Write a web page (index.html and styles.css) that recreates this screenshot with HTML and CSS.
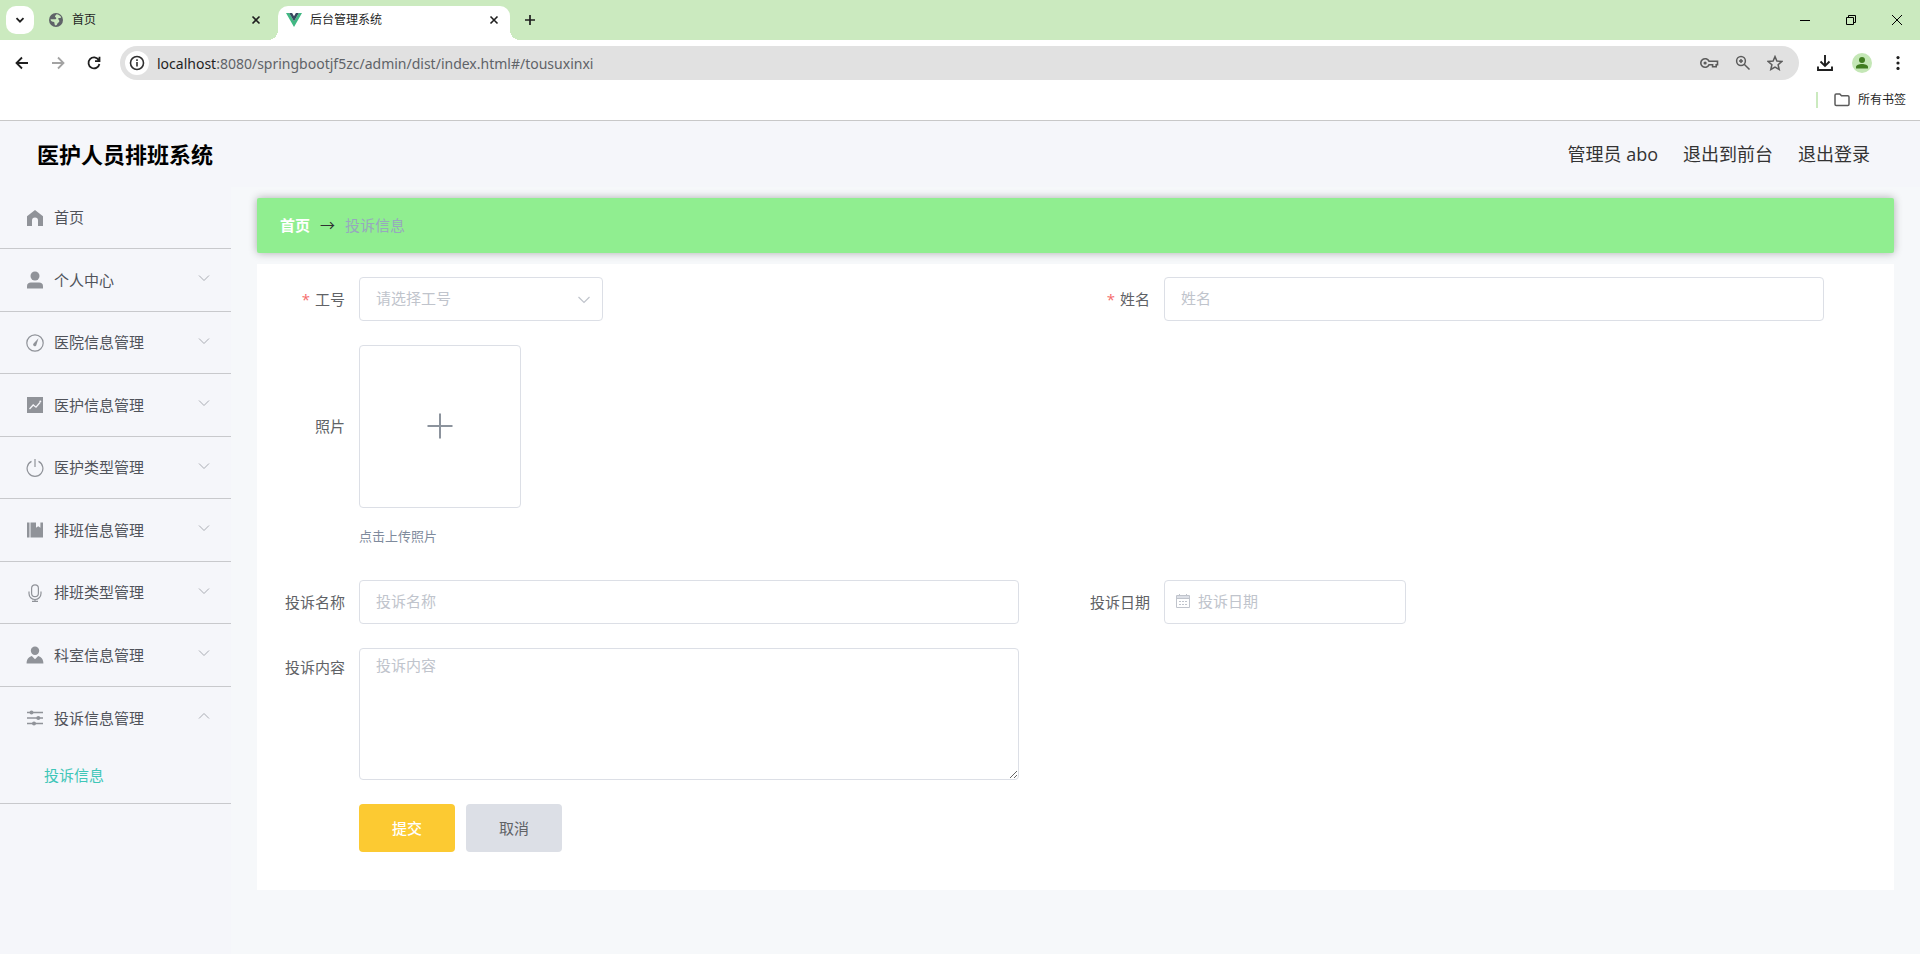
FILE: index.html
```html
<!DOCTYPE html>
<html lang="zh-CN">
<head>
<meta charset="utf-8">
<title>后台管理系统</title>
<link rel="stylesheet" href="styles.css">
</head>
<body>
<div class="browser">
  <div class="tabstrip">
    <button class="tab-search" aria-label="搜索标签页"><svg width="10" height="10" viewBox="0 0 10 10"><path d="M1.500 3.200L5 6.700l3.500-3.500" fill="none" stroke="#1f1f1f" stroke-width="1.800"/></svg></button>
    <div class="tab">
      <svg width="16" height="16" viewBox="0 0 16 16"><circle cx="8" cy="8" r="7" fill="#5f6368"/><path d="M8.600 2.200c-1 1-1.600 1.300-1.600 2.400 0 .9 1.300.7 1.300 1.700s-1.300 1-2.500 1H2.600c0 1.800 1 2.300 2.400 2.400 1.700.1 1.500 1.200 1.500 2.100 0 .8.500 1.600 1.300 1.700 1.600-.3 1-1.700 2-2.500.8-.6 1.500-.8 1.500-1.900 0-1.300-1.100-1.300-1.100-2.300 0-.8 1-.8 2.100-.8.600-.1.900-.4.800-.9-1-1.700-2.500-2.700-4.500-2.900z" fill="#cbeabf"/></svg>
      <span class="tab-title">首页</span>
      <button class="tab-close" aria-label="关闭"><svg width="10" height="10" viewBox="0 0 10 10"><path d="M1.500 1.500l7 7m0-7l-7 7" stroke="#1f1f1f" stroke-width="1.600"/></svg></button>
    </div>
    <div class="tab tab-active">
      <svg width="16" height="16" viewBox="0 0 16 16"><path d="M0 1h3.200L8 9.300 12.800 1H16L8 15z" fill="#41b883"/><path d="M3.200 1h2.900L8 4.300 9.900 1h2.900L8 9.300z" fill="#35495e"/></svg>
      <span class="tab-title">后台管理系统</span>
      <button class="tab-close" aria-label="关闭"><svg width="10" height="10" viewBox="0 0 10 10"><path d="M1.500 1.500l7 7m0-7l-7 7" stroke="#1f1f1f" stroke-width="1.600"/></svg></button>
    </div>
    <button class="tab-new" aria-label="新标签页"><svg width="12" height="12" viewBox="0 0 12 12"><path d="M6 1v10M1 6h10" stroke="#1f1f1f" stroke-width="1.700"/></svg></button>
    <div class="window-controls">
      <button aria-label="最小化"><svg width="12" height="12" viewBox="0 0 12 12"><path d="M1 6.500h10" stroke="#000"/></svg></button>
      <button aria-label="还原"><svg width="12" height="12" viewBox="0 0 12 12"><path d="M1.500 3.500h7v7h-7zM3.500 3.500v-2h7v7h-2" fill="none" stroke="#000"/></svg></button>
      <button aria-label="关闭窗口"><svg width="12" height="12" viewBox="0 0 12 12"><path d="M1 1l10 10M11 1L1 11" stroke="#000"/></svg></button>
    </div>
  </div>
  <div class="toolbar">
    <div class="toolbar-nav">
      <button aria-label="后退"><svg width="16" height="16" viewBox="0 0 16 16"><path d="M14 8H3M8 2.500L2.500 8 8 13.500" fill="none" stroke="#1f1f1f" stroke-width="1.800"/></svg></button>
      <button aria-label="前进"><svg width="16" height="16" viewBox="0 0 16 16"><path d="M2 8h11M8 2.500L13.500 8 8 13.500" fill="none" stroke="#a3a3a3" stroke-width="1.800"/></svg></button>
      <button aria-label="刷新"><svg width="16" height="16" viewBox="0 0 16 16"><path d="M12.700 5A5.500 5.500 0 1 0 13.400 9M13.500 1.800v4.400H9" fill="none" stroke="#1f1f1f" stroke-width="1.800"/></svg></button>
    </div>
    <div class="omnibox">
      <button class="site-info" aria-label="网站信息"><svg width="16" height="16" viewBox="0 0 16 16"><circle cx="8" cy="8" r="6.500" fill="none" stroke="#303030" stroke-width="1.600"/><path d="M8 7v4.500M8 4.300v1.600" stroke="#303030" stroke-width="1.600"/></svg></button>
      <div class="url" role="textbox" contenteditable="true" spellcheck="false" aria-label="地址栏"><span class="url-host">localhost</span>:8080/springbootjf5zc/admin/dist/index.html#/tousuxinxi</div>
      <button aria-label="密码"><svg width="20" height="16" viewBox="0 0 20 16"><path d="M10 6.200h8.500v3.600h-1.300v2h-3.600v-2H10A4.300 4.300 0 1 1 10 6.200z" fill="none" stroke="#5b5b5b" stroke-width="1.600"/><circle cx="6.100" cy="8" r="1.600" fill="#5b5b5b"/></svg></button>
      <button aria-label="缩放"><svg width="16" height="16" viewBox="0 0 16 16"><circle cx="6" cy="6" r="4.400" fill="none" stroke="#5b5b5b" stroke-width="1.500"/><path d="M9.200 9.200l5.300 5.300M6 4v4M4 6h4" stroke="#5b5b5b" stroke-width="1.500"/></svg></button>
      <button aria-label="收藏"><svg width="16" height="16" viewBox="0 0 16 16"><path d="M8 1.600l1.900 4.500 4.900.4-3.700 3.200 1.100 4.800L8 12l-4.200 2.500 1.100-4.800L1.200 6.500l4.900-.4z" fill="none" stroke="#5b5b5b" stroke-width="1.500"/></svg></button>
    </div>
    <div class="toolbar-actions">
      <button aria-label="下载"><svg width="18" height="18" viewBox="0 0 18 18"><path d="M9 1v10.500M4.500 7.500L9 12l4.500-4.500M2 12.500V16h14v-3.500" fill="none" stroke="#1f1f1f" stroke-width="1.900"/></svg></button>
      <button aria-label="用户"><svg width="20" height="20" viewBox="0 0 20 20"><circle cx="10" cy="10" r="10" fill="#c4e7b6"/><circle cx="10" cy="7" r="3" fill="#3f7d20"/><path d="M4 15.500v-1.500c0-2 3-3 6-3s6 1 6 3v1.500z" fill="#3f7d20"/></svg></button>
      <button aria-label="菜单"><svg width="16" height="16" viewBox="0 0 16 16"><g fill="#1f1f1f"><circle cx="8" cy="2.600" r="1.600"/><circle cx="8" cy="8" r="1.600"/><circle cx="8" cy="13.400" r="1.600"/></g></svg></button>
    </div>
  </div>
  <div class="bookmarks">
    <span class="bookmarks-divider"></span>
    <button class="bookmarks-all"><svg width="16" height="14" viewBox="0 0 16 14"><path d="M1 2.200C1 1.500 1.500 1 2.200 1h3.600l1.700 1.800h6.300c.7 0 1.200.5 1.200 1.200v7.300c0 .7-.5 1.200-1.200 1.200H2.200c-.7 0-1.200-.5-1.200-1.200z" fill="none" stroke="#5b5b5b" stroke-width="1.500"/></svg>所有书签</button>
  </div>
</div>

<div class="app">
  <header class="app-header">
    <h1 class="app-title">医护人员排班系统</h1>
    <nav class="app-links">
      <span>管理员 abo</span>
      <a href="#/front">退出到前台</a>
      <a href="#/login">退出登录</a>
    </nav>
  </header>
  <div class="app-body">
    <aside class="sidebar">
      <ul class="menu">
        <li class="menu-item"><a class="menu-row" href="#/">
          <svg class="menu-icon" viewBox="0 0 18 18"><path d="M9 1l8 6.300V17h-5v-5.500a3 3 0 0 0-6 0V17H1V7.300z" fill="#909399"/></svg><span>首页</span></a></li>
        <li class="menu-item"><a class="menu-row" href="#/center">
          <svg class="menu-icon" viewBox="0 0 18 18"><circle cx="9" cy="5" r="4.500" fill="#909399"/><path d="M1 17.500v-2.300C1 12.800 2.500 11.500 5 11.500h8c2.500 0 4 1.300 4 3.700v2.300z" fill="#909399"/></svg><span>个人中心</span>
          <svg class="menu-arrow" viewBox="0 0 12 12"><path d="M1 3.500l5 5 5-5"/></svg></a></li>
        <li class="menu-item"><a class="menu-row" href="#/hospital">
          <svg class="menu-icon" viewBox="0 0 18 18"><circle cx="9" cy="9" r="8.200" fill="none" stroke="#909399" stroke-width="1.200"/><path d="M12.500 4.200l-2 6.300a1.700 1.700 0 1 1-2.700-1.300z" fill="#909399"/></svg><span>医院信息管理</span>
          <svg class="menu-arrow" viewBox="0 0 12 12"><path d="M1 3.500l5 5 5-5"/></svg></a></li>
        <li class="menu-item"><a class="menu-row" href="#/staff">
          <svg class="menu-icon" viewBox="0 0 18 18"><path d="M1 1h16v16H1z" fill="#909399"/><path d="M3.500 13l3.700-4 2.800 2.200 4-4.700" fill="none" stroke="#f5f6fa" stroke-width="1.300"/><circle cx="14.300" cy="5.500" r="1" fill="#f5f6fa"/></svg><span>医护信息管理</span>
          <svg class="menu-arrow" viewBox="0 0 12 12"><path d="M1 3.500l5 5 5-5"/></svg></a></li>
        <li class="menu-item"><a class="menu-row" href="#/staff-type">
          <svg class="menu-icon" viewBox="0 0 18 18"><path d="M9 0v8M5.500 2.400a7.900 7.900 0 1 0 7 0" fill="none" stroke="#909399" stroke-width="1.200"/></svg><span>医护类型管理</span>
          <svg class="menu-arrow" viewBox="0 0 12 12"><path d="M1 3.500l5 5 5-5"/></svg></a></li>
        <li class="menu-item"><a class="menu-row" href="#/shift">
          <svg class="menu-icon" viewBox="0 0 18 18"><path d="M1 1.500h2.500v15H1zM4.500 1.500H10v5.200l2.200-1.500 2.200 1.500V1.500H17v15H4.500z" fill="#909399"/></svg><span>排班信息管理</span>
          <svg class="menu-arrow" viewBox="0 0 12 12"><path d="M1 3.500l5 5 5-5"/></svg></a></li>
        <li class="menu-item"><a class="menu-row" href="#/shift-type">
          <svg class="menu-icon" viewBox="0 0 18 18"><g fill="none" stroke="#909399" stroke-width="1.200"><rect x="5.600" y=".8" width="6.800" height="11.800" rx="3.400"/><path d="M3 7.500v2a6 6 0 0 0 12 0v-2M9 15.500v2M6 17.400h6"/></g></svg><span>排班类型管理</span>
          <svg class="menu-arrow" viewBox="0 0 12 12"><path d="M1 3.500l5 5 5-5"/></svg></a></li>
        <li class="menu-item"><a class="menu-row" href="#/dept">
          <svg class="menu-icon" viewBox="0 0 18 18"><circle cx="9" cy="4.700" r="4.200" fill="#909399"/><path d="M.6 17.500c0-4 2-6.700 5.200-7.500L9 13.300l3.200-3.300c3.200.8 5.200 3.500 5.200 7.500z" fill="#909399"/></svg><span>科室信息管理</span>
          <svg class="menu-arrow" viewBox="0 0 12 12"><path d="M1 3.500l5 5 5-5"/></svg></a></li>
        <li class="menu-item"><a class="menu-row" href="#/complaint">
          <svg class="menu-icon" viewBox="0 0 18 18"><path d="M1 3.500h16M1 9h16M1 14.500h16" stroke="#909399" stroke-width="1.300"/><g fill="#909399"><circle cx="5.500" cy="3.500" r="2"/><circle cx="12.300" cy="9" r="2"/><circle cx="8" cy="14.500" r="2"/></g></svg><span>投诉信息管理</span>
          <svg class="menu-arrow" viewBox="0 0 12 12"><path d="M1 8.500l5-5 5 5"/></svg></a>
          <a class="submenu-row" href="#/tousuxinxi">投诉信息</a></li>
      </ul>
    </aside>
    <main class="content">
      <nav class="breadcrumb">
        <a href="#/">首页</a><span class="breadcrumb-arrow">→</span><span class="breadcrumb-current">投诉信息</span>
      </nav>
      <form class="panel">
        <div class="field field-required">
          <label class="field-label" for="job">工号</label>
          <div class="control control-select">
            <select id="job" class="input" required><option value="">请选择工号</option></select>
            <svg class="select-arrow" width="12" height="12" viewBox="0 0 12 12"><path d="M.5 3l5.500 5.500L11.500 3" fill="none" stroke="#c0c4cc" stroke-width="1.200"/></svg>
          </div>
        </div>
        <div class="field field-required">
          <label class="field-label" for="name">姓名</label>
          <div class="control"><input id="name" class="input" type="text" placeholder="姓名"></div>
        </div>
        <div class="field field-wide">
          <label class="field-label field-label-photo" for="photo">照片</label>
          <div class="control">
            <button id="photo" class="upload" type="button" aria-label="上传照片"><svg width="26" height="26" viewBox="0 0 26 26"><path d="M13 .5v25M.5 13h25" stroke="#8c939d" stroke-width="2"/></svg></button>
            <p class="upload-tip">点击上传照片</p>
          </div>
        </div>
        <div class="field">
          <label class="field-label" for="title">投诉名称</label>
          <div class="control"><input id="title" class="input" type="text" placeholder="投诉名称"></div>
        </div>
        <div class="field">
          <label class="field-label" for="date">投诉日期</label>
          <div class="control control-date">
            <input id="date" class="input" type="text" placeholder="投诉日期">
            <svg class="date-icon" width="14" height="14" viewBox="0 0 14 14"><path d="M.5 1.500h13v12H.5zM.5 4.500h13M3.500 0v3M10.500 0v3" fill="none" stroke="#c0c4cc"/><path d="M1 3h12" stroke="#dcdfe6" stroke-width="2"/><path d="M3 7.500h2m1 0h2m1 0h2M3 10.500h2m1 0h2m1 0h2" stroke="#c0c4cc"/></svg>
          </div>
        </div>
        <div class="field field-wide">
          <label class="field-label field-label-area" for="body">投诉内容</label>
          <div class="control control-half"><textarea id="body" class="input textarea" placeholder="投诉内容"></textarea></div>
        </div>
        <div class="actions">
          <button class="btn btn-primary" type="button">提交</button>
          <button class="btn btn-default" type="button">取消</button>
        </div>
      </form>
    </main>
  </div>
</div>
</body>
</html>
```

FILE: styles.css
```css
* {
  box-sizing: border-box;
}

body {
  margin: 0;
  min-height: 100vh;
  display: flex;
  flex-direction: column;
  background: #f5f6fa;
  color: #606266;
  font: 15px/1.5 "Open Sans", "Noto Sans CJK SC", sans-serif;
}

a {
  color: inherit;
  text-decoration: none;
}

svg {
  display: block;
  flex: none;
}

button {
  display: flex;
  align-items: center;
  justify-content: center;
  padding: 0;
  border: 0;
  background: none;
  font: inherit;
  color: inherit;
}

/* Browser frame */
.browser {
  background: #fff;
  border-bottom: 1px solid #c8c8c8;
  color: #1f1f1f;
  font-size: 12px;
}

.tabstrip {
  display: flex;
  align-items: flex-end;
  height: 40px;
  padding-left: 6px;
  background: #cbeabf;
}

.tab-search {
  width: 28px;
  height: 28px;
  margin: 0 6px 6px 0;
  border-radius: 10px;
  background: #fff;
}

.tab {
  position: relative;
  display: flex;
  align-items: center;
  gap: 8px;
  width: 232px;
  height: 34px;
  padding: 0 8px;
  padding-bottom: 6px;
}

.tab:not(.tab-active) {
  width: 238px;
  padding-right: 14px;
}

.tab-active {
  background: #fff;
  border-radius: 10px 10px 0 0;
}

.tab-active::before,
.tab-active::after {
  content: "";
  position: absolute;
  bottom: 0;
  width: 10px;
  height: 10px;
}

.tab-active::before {
  right: 100%;
  background: radial-gradient(circle at 0 0, #cbeabf 10px, #fff 10px);
}

.tab-active::after {
  left: 100%;
  background: radial-gradient(circle at 100% 0, #cbeabf 10px, #fff 10px);
}

.tab-title {
  flex: 1;
}

.tab-close {
  width: 16px;
  height: 16px;
}

.tab-new {
  width: 28px;
  height: 28px;
  margin: 0 0 6px 6px;
}

.window-controls {
  display: flex;
  align-self: flex-start;
  margin-left: auto;
}

.window-controls button {
  width: 46px;
  height: 40px;
}

.toolbar {
  display: flex;
  align-items: center;
  padding: 6px 14px 0;
}

.toolbar-nav {
  display: flex;
  gap: 20px;
  margin-right: 18px;
}

.omnibox {
  flex: 1;
  display: flex;
  align-items: center;
  gap: 16px;
  height: 34px;
  padding: 0 16px 0 5px;
  border-radius: 17px;
  background: #e1e1e1;
}

.site-info {
  width: 24px;
  height: 24px;
  border-radius: 12px;
  background: #fff;
}

.url {
  flex: 1;
  margin-left: -8px;
  color: #5f6368;
  font-family: "Noto Sans", sans-serif;
  font-size: 14px;
  white-space: nowrap;
}

.url-host {
  color: #1f1f1f;
}

.toolbar-actions {
  display: flex;
  align-items: center;
  gap: 18px;
  margin-left: 17px;
}

.bookmarks {
  display: flex;
  align-items: center;
  justify-content: flex-end;
  gap: 16px;
  height: 40px;
  padding-right: 14px;
}

.bookmarks-divider {
  width: 2px;
  height: 16px;
  background: #cbeabf;
}

.bookmarks-all {
  gap: 8px;
}

/* Application */
.app {
  flex: 1;
  display: flex;
  flex-direction: column;
}

.app-header {
  display: flex;
  align-items: center;
  justify-content: space-between;
  height: 66px;
  padding: 0 50px 0 37px;
}

.app-title {
  margin: 0;
  color: #000;
  font-size: 22px;
  font-weight: 700;
}

.app-links {
  display: flex;
  gap: 25px;
  color: #333;
  font-size: 18px;
}

.app-body {
  flex: 1;
  display: flex;
}

.sidebar {
  width: 231px;
  flex: none;
}

.menu {
  margin: 0;
  padding: 0;
  list-style: none;
}

.menu-item {
  border-bottom: 1px solid #c8c9cc;
}

.menu-row {
  display: flex;
  align-items: center;
  gap: 10px;
  height: 61px;
  padding: 0 21px 0 26px;
  color: #50535a;
}

.menu-item:nth-child(even) .menu-row,
.menu-item:last-child .menu-row {
  height: 62px;
}

.menu-icon {
  width: 18px;
  height: 18px;
}

.menu-arrow {
  width: 12px;
  height: 12px;
  margin-left: auto;
  margin-bottom: 4px;
  fill: none;
  stroke: #a9acb3;
  stroke-width: 1;
}

.submenu-row {
  display: block;
  padding-left: 44px;
  padding-bottom: 2px;
  line-height: 52px;
  color: #3fc6b8;
}

.content {
  flex: 1;
  min-width: 0;
  padding: 11px 26px 26px;
  background: #f6f8fa;
}

.breadcrumb {
  display: flex;
  align-items: center;
  height: 55px;
  margin-bottom: 11px;
  padding: 0 23px;
  border-radius: 2px;
  background: #90ee90;
  box-shadow: 0 0 8px rgba(0, 0, 0, 0.3);
}

.breadcrumb a {
  color: #fff;
  font-weight: 700;
}

.breadcrumb-arrow {
  margin: 0 10px;
  color: #303133;
}

.breadcrumb-current {
  color: #97a8be;
}

.panel {
  display: grid;
  grid-template-columns: 1fr 1fr;
  row-gap: 24px;
  padding: 13px 13px 38px 14px;
  background: #fff;
}

.field {
  display: flex;
  align-items: flex-start;
}

.field-wide {
  grid-column: 1 / -1;
}

.field-label {
  width: 88px;
  flex: none;
  padding-right: 14px;
  line-height: 44px;
  text-align: right;
}

.field-label-photo {
  line-height: 162px;
}

.field-label-area {
  line-height: 38px;
}

.field-required .field-label::before {
  content: "*";
  margin-right: 5px;
  color: #f56c6c;
}

.control {
  position: relative;
  flex: 1;
  margin-right: 57px;
}

.control-select {
  flex: 0 1 244px;
}

.control-date {
  flex: 0 1 242px;
}

.control-half {
  flex: 0 1 calc(50% - 145px);
}

.input {
  display: block;
  width: 100%;
  height: 44px;
  padding: 0 16px 2px;
  border: 1px solid #dcdfe6;
  border-radius: 4px;
  background: #fff;
  color: #c0c4cc;
  font: inherit;
  appearance: none;
  outline: none;
}

.input::placeholder {
  color: #c0c4cc;
}

.select-arrow {
  position: absolute;
  top: 17px;
  right: 13px;
  pointer-events: none;
}

.control-date .input {
  padding-left: 33px;
}

.date-icon {
  position: absolute;
  top: 14px;
  left: 12px;
}

.textarea {
  height: 132px;
  padding: 5px 16px;
  resize: vertical;
}

.upload {
  width: 162px;
  height: 163px;
  padding-bottom: 2px;
  border: 1px solid #dcdfe6;
  border-radius: 4px;
}

.upload-tip {
  margin: 8px 0 0;
  color: #7f8b9d;
  font-size: 13px;
  line-height: 40px;
}

.actions {
  grid-column: 1 / -1;
  display: flex;
  gap: 11px;
  padding-left: 88px;
}

.btn {
  width: 96px;
  height: 48px;
  border-radius: 4px;
}

.btn-primary {
  background: #fcca32;
  color: #fff;
  font-weight: 500;
}

.btn-default {
  background: #dcdfe6;
}
```
